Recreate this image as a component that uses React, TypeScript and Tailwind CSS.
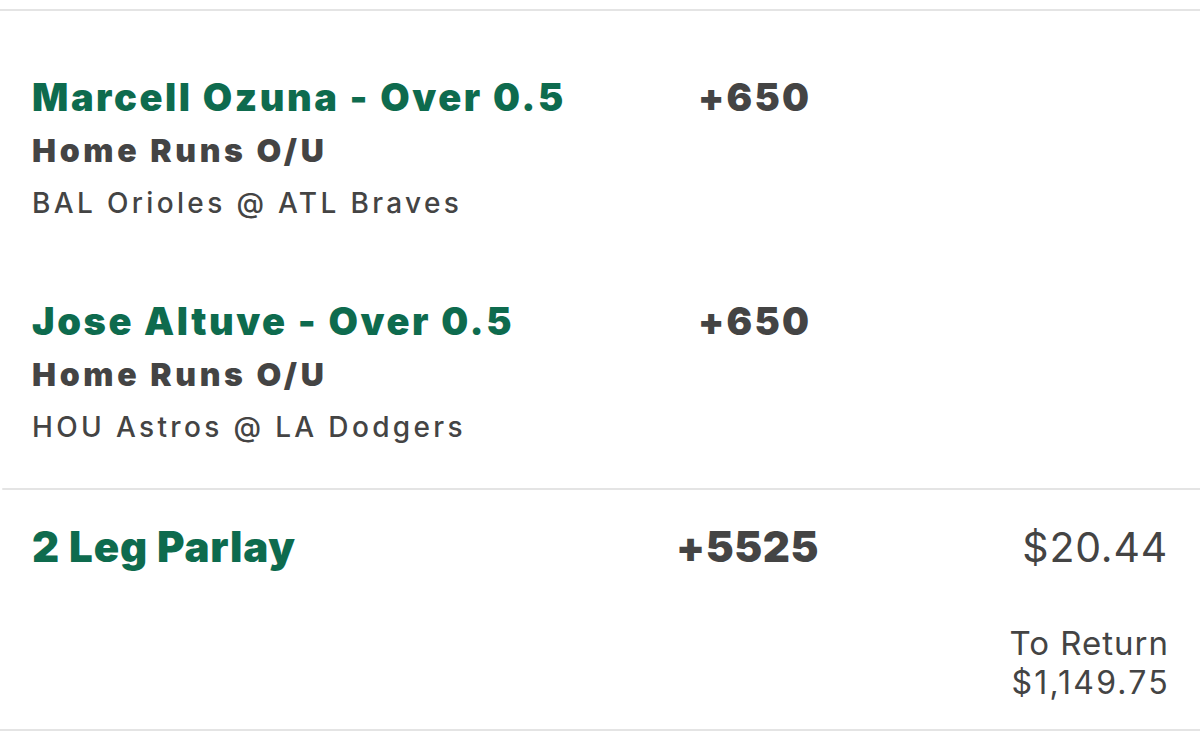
import React from "react";

const font = { fontFamily: "Inter, 'Noto Sans', sans-serif" };

function Leg({ title, market, game, odds, pt }: { title: string; market: string; game: string; odds: string; pt: string }) {
  return (
    <div className={`flex ${pt}`}>
      <div className="w-[698px] pl-[32px] flex flex-col">
        <div className="text-[38px] leading-[44px] font-black text-[#0e6b4e] tracking-[2.55px]">{title}</div>
        <div className="mt-[12px] text-[32px] leading-[40px] font-black text-[#444444] tracking-[3.65px]">{market}</div>
        <div className="mt-[14px] text-[28px] leading-[36px] font-medium text-[#444444] tracking-[3.35px]">{game}</div>
      </div>
      <div className="w-[140px] text-[38px] leading-[44px] font-black text-[#444444] tracking-[2.2px]">{odds}</div>
    </div>
  );
}

export default function App() {
  return (
    <div className="w-[1200px] h-[734px] bg-white overflow-hidden" style={font}>
      <div className="h-[9px]" />
      <div className="h-[2px] bg-[#e4e4e4]" />
      <Leg title="Marcell Ozuna - Over 0.5" market="Home Runs O/U" game="BAL Orioles @ ATL Braves" odds="+650" pt="pt-[64px]" />
      <Leg title="Jose Altuve - Over 0.5" market="Home Runs O/U" game="HOU Astros @ LA Dodgers" odds="+650" pt="pt-[78px]" />
      <div className="h-[43px]" />
      <div className="h-[2px] bg-[#e4e4e4] ml-[2px] rounded-l-sm" />
      <div className="flex pt-[33px]">
        <div className="w-[676px] pl-[32px] text-[42px] leading-[48px] font-black text-[#0e6b4e] tracking-[0.8px]">2 Leg Parlay</div>
        <div className="w-[260px] text-[42px] leading-[48px] font-black text-[#444444] tracking-[0.6px]">+5525</div>
        <div className="flex-1 pr-[33px] flex flex-col items-end text-[#444444]">
          <div className="text-[41px] leading-[48px] tracking-[0.8px] mr-[-1px]">$20.44</div>
          <div className="mt-[52px] text-[33px] leading-[40px] tracking-[1px] mr-[-2px]">To Return</div>
          <div className="text-[32px] leading-[40px] tracking-[2.2px] mr-[-3px]">$1,149.75</div>
        </div>
      </div>
      <div className="h-[2px] bg-[#e4e4e4] mt-[26px]" />
    </div>
  );
}
